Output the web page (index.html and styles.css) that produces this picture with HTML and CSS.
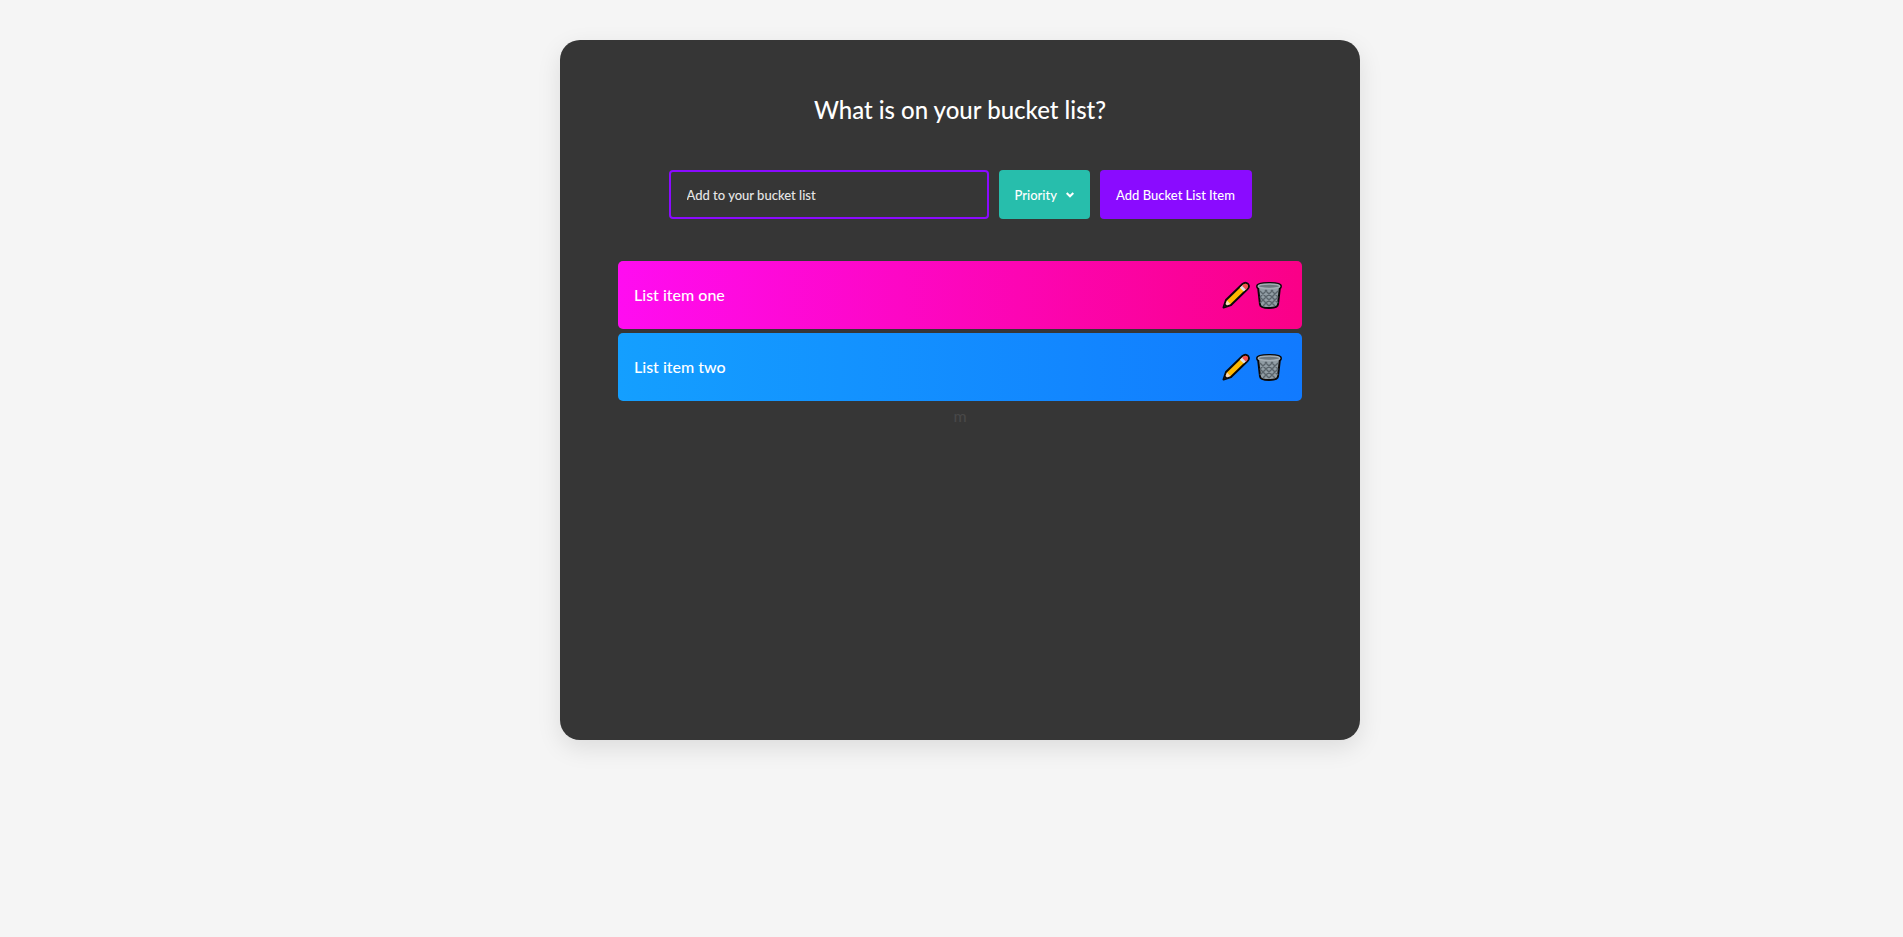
FILE: index.html
```html
<!DOCTYPE html>
<html lang="en">
<head>
<meta charset="utf-8">
<title>Bucket List</title>
<link rel="stylesheet" href="styles.css">
</head>
<body>
<svg class="sprite" aria-hidden="true">
  <symbol id="pencil" viewBox="0 0 28 28">
    <path d="M1.500 26.500 L4 19 L20.500 3 Q23.500 0.500 26 3 Q28 5.500 25.500 8 L9 24 Z" fill="#ffb900" stroke="#0b0909" stroke-width="2" stroke-linejoin="round"/>
    <path d="M2.500 25.500 L5 19.500 L8.500 23 Z" fill="#f9d9bd"/>
    <path d="M2 26 L3.200 22.800 L5.300 24.800 Z" fill="#0b0909"/>
    <path d="M17.800 6.800 L21 3.800 L24.900 7.600 L21.800 10.500 Z" fill="#dde2e6"/>
    <path d="M20 4.700 Q23.300 1.500 25.300 3.500 Q27.300 5.500 24 8.700 Z" fill="#f4504f"/>
  </symbol>
  <symbol id="trash" viewBox="0 0 28 28">
    <path d="M2 5 Q2 2 14 2 Q26 2 26 5 Q26 7 24.800 7.500 L23 23.500 Q22.700 27 14 27 Q5.300 27 5 23.500 L3.200 7.500 Q2 7 2 5 Z" fill="#919da4" stroke="#0b0909" stroke-width="2"/>
    <path d="M5 10 L20 25 M5 16 L14 25 M10 9 L23 22 M16 9 L23 16 M23 10 L8 25 M23 16 L14 25 M18 9 L5 22 M12 9 L5 16" stroke="#5b656c" stroke-width="1.400"/>
    <ellipse cx="14" cy="5.200" rx="10.800" ry="2.300" fill="#6d777e" stroke="#a4aeb5" stroke-width="1.500"/>
  </symbol>
</svg>
<main class="card">
  <h1 class="title">What is on your bucket list?</h1>
  <form class="form">
    <input class="field" type="text" aria-label="Bucket list item" placeholder="Add to your bucket list">
    <span class="priority">
      <select class="priority-select" aria-label="Priority">
        <option>Priority</option>
      </select>
      <svg class="chevron" viewBox="0 0 8 6" aria-hidden="true"><path d="M0.700 1 L4 4.300 L7.300 1" fill="none" stroke="#fff" stroke-width="2"/></svg>
    </span>
    <button class="submit" type="button">Add Bucket List Item</button>
  </form>
  <ul class="list">
    <li class="item item-pink">
      <span class="label">List item one</span>
      <span class="actions">
        <button class="action" type="button" aria-label="Edit item one"><svg class="icon"><use href="#pencil"/></svg></button>
        <button class="action" type="button" aria-label="Delete item one"><svg class="icon"><use href="#trash"/></svg></button>
      </span>
    </li>
    <li class="item item-blue">
      <span class="label">List item two</span>
      <span class="actions">
        <button class="action" type="button" aria-label="Edit item two"><svg class="icon"><use href="#pencil"/></svg></button>
        <button class="action" type="button" aria-label="Delete item two"><svg class="icon"><use href="#trash"/></svg></button>
      </span>
    </li>
  </ul>
  <p class="note">m</p>
</main>
</body>
</html>
```
FILE: styles.css
```css
* {
  box-sizing: border-box;
  margin: 0;
  padding: 0;
  font-family: "Trebuchet MS", Lato, sans-serif;
  font-weight: 500;
}
body {
  background: #f5f5f5;
  padding: 40px 0 40px 17px;
}
.sprite {
  display: none;
}
.card {
  max-width: 800px;
  min-height: 700px;
  margin: 0 auto;
  padding: 54px 48px 32px;
  background: #363636;
  border-radius: 20px;
  box-shadow: 0 8px 24px rgba(0, 0, 0, 0.1);
  color: #fff;
  text-align: center;
}
.title {
  font-size: 24px;
  line-height: 32px;
}
.form {
  display: flex;
  justify-content: center;
  gap: 10px;
  margin: 44px 0 42px;
}
.field {
  flex: 0 1 320px;
  min-width: 0;
  height: 49px;
  padding: 0 16px;
  border: 2px solid #8a0bff;
  border-radius: 4px;
  background: transparent;
  color: #fff;
  font-size: 13px;
}
.field::placeholder {
  color: #e6e6e6;
  opacity: 1;
}
.priority {
  display: grid;
  align-items: center;
}
.priority-select {
  grid-area: 1 / 1;
  appearance: none;
  min-width: 90px;
  height: 49px;
  padding: 0 32px 0 16px;
  border: none;
  border-radius: 4px;
  background: #27beac;
  color: #fff;
  font-size: 13px;
}
.chevron {
  grid-area: 1 / 1;
  justify-self: end;
  width: 8px;
  height: 6px;
  margin-right: 16px;
  pointer-events: none;
}
.submit {
  min-width: 152px;
  padding: 0 14px;
  border: none;
  border-radius: 4px;
  background: #8a0bff;
  color: #fff;
  font-size: 13px;
}
.list {
  list-style: none;
  display: grid;
  gap: 4px;
  padding: 0 10px;
}
.item {
  display: flex;
  align-items: center;
  justify-content: space-between;
  min-height: 68px;
  padding: 16px 19px 16px 16px;
  border-radius: 5px;
  font-size: 16px;
}
.item-pink {
  background: linear-gradient(90deg, #ff0cf1 0%, #fa0087 100%);
}
.item-blue {
  background: linear-gradient(90deg, #149fff 0%, #117aff 100%);
}
.label {
  padding-bottom: 2px;
}
.actions {
  display: flex;
  gap: 5px;
}
.action {
  display: flex;
  border: none;
  background: none;
}
.icon {
  width: 28px;
  height: 28px;
}
.note {
  margin-top: 3px;
  color: #484848;
  font-size: 16px;
  line-height: 24px;
}
```
